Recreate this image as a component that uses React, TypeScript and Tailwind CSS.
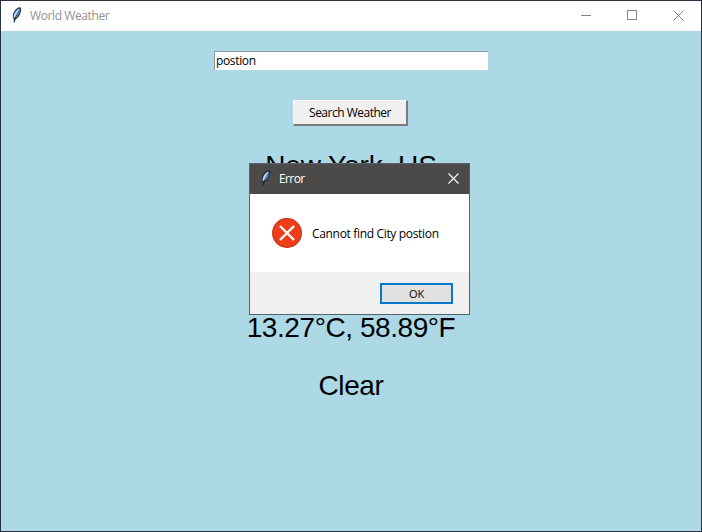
function Feather({ className }: { className: string }) {
  return (
    <svg className={className} viewBox="0 0 10 16" fill="none">
      <path d="M8.4 .3C10 .5 9.8 2.8 9.2 5.2 8.4 8.2 6.6 10.9 4.2 12.2L3 15.6 2 15.4 2.4 12.6C.8 10.2 1 7 2.8 4.2 4.2 2 6.6.2 8.4.3Z" fill="#1b2940" />
      <path d="M8.2 1.2C5.2 2.3 2.1 6 2 9.8L2.9 11.2 5.6 6.6Z" fill="#a5c6ec" />
      <path d="M8.6 1.6C9 5.3 7 9.4 4 11.2L5.4 6.6Z" fill="#5580b8" />
      <path d="M7.6 2.2 4.6 6 3 10.4" stroke="#e3effc" strokeWidth=".6" />
    </svg>
  );
}

export default function App() {
  return (
    <div className="relative flex h-[532px] w-[702px] flex-col overflow-hidden border border-[#27333e] bg-[#add8e6] font-['Open_Sans','Noto_Sans',sans-serif] text-[12px] leading-4 text-black">
      <header className="flex h-[30px] shrink-0 items-center bg-white pl-[10px] text-[#929292]">
        <Feather className="mb-[2px] h-4 w-[11px]" />
        <span className="ml-2 whitespace-nowrap tracking-[-0.4px]">World Weather</span>
        <div className="ml-auto flex items-center gap-[35px] pr-[17px] pb-px">
          <svg className="h-[11px] w-[11px]" viewBox="0 0 11 11" stroke="#858585"><path d="M0 5.5h10" /></svg>
          <svg className="h-[11px] w-[11px]" viewBox="0 0 11 11" fill="none" stroke="#858585"><path d="M.5.5h9v9h-9z" /></svg>
          <svg className="h-[11px] w-[11px]" viewBox="0 0 11 11" stroke="#858585"><path d="M.5.5l10 10M10.5.5l-10 10" /></svg>
        </div>
      </header>
      <main className="flex flex-col items-center pt-5">
        <input aria-label="City" defaultValue="postion" className="h-[19px] w-[274px] rounded-none border-l border-t border-[#8b9ba2] bg-white pb-px pl-[1px] pt-0 tracking-[-0.35px] outline-none" />
        <button className="mr-px mt-[30px] h-[26px] w-[115px] border border-b-2 border-r-2 border-b-[#7b7b7b] border-l-white border-r-[#7b7b7b] border-t-white bg-[#f0f0f0] leading-4 tracking-[-0.5px]">Search Weather</button>
        <div className="flex flex-col items-center whitespace-nowrap font-['Liberation_Sans',Arial,sans-serif] text-[28px] leading-8">
          <h1 className="mt-6 tracking-[-0.1px]">New York, US</h1>
          <p className="mt-[130px] tracking-[-0.43px]">13.27°C, 58.89°F</p>
          <p className="mt-[26px] tracking-[-0.4px]">Clear</p>
        </div>
      </main>
      <section role="alertdialog" aria-label="Error" className="absolute left-[248px] top-[162px] flex h-[152px] w-[221px] flex-col border border-[#56636a] bg-white">
        <div className="flex h-[30px] shrink-0 items-center bg-[#4b4a48] pl-[10px] pr-[10px] text-white">
          <Feather className="mb-[2px] h-4 w-[11px]" />
          <span className="ml-2 tracking-[-0.6px]">Error</span>
          <svg className="mb-[2px] ml-auto h-[11px] w-[11px]" viewBox="0 0 11 11" stroke="white" strokeWidth="1.1"><path d="M.5.5l10 10M10.5.5l-10 10" /></svg>
        </div>
        <div className="flex h-[78px] shrink-0 items-center pl-[22px]">
          <svg className="h-[30px] w-[30px] shrink-0" viewBox="0 0 30 30">
            <circle cx="15" cy="15" r="14.4" fill="#ef3d19" stroke="#c73518" strokeWidth="1.1" />
            <path d="M8 8l14 14M22 8L8 22" stroke="white" strokeWidth="2.4" />
          </svg>
          <span className="ml-[10px] mt-[2px] whitespace-nowrap tracking-[-0.33px]">Cannot find City postion</span>
        </div>
        <div className="flex flex-1 items-center justify-end bg-[#f0f0f0] pr-4">
          <button className="h-[21px] w-[73px] border-2 border-[#0878c9] bg-[#e1e1e1] pt-px text-[11px] leading-4 tracking-[-0.2px]">OK</button>
        </div>
      </section>
    </div>
  );
}
